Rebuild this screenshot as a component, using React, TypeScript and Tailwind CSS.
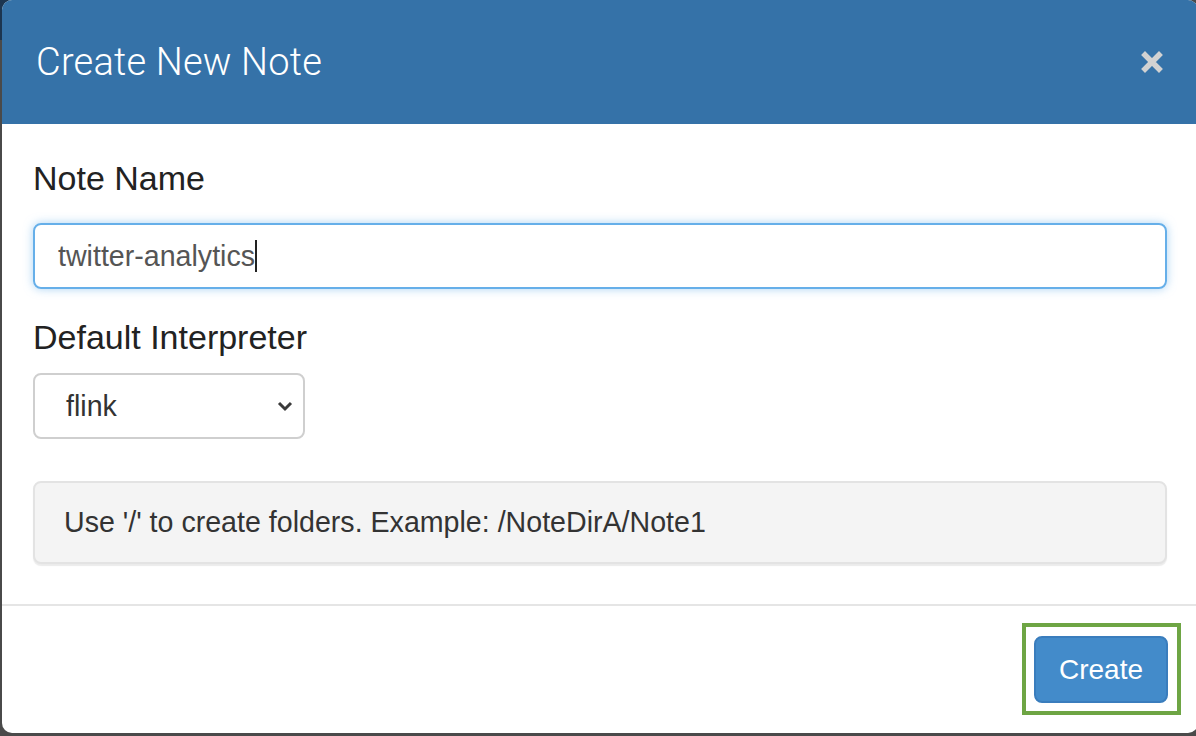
export default function App() {
  return (
    <div className="relative w-[1196px] h-[736px] overflow-hidden bg-[#4a4a4a] font-['Liberation_Sans',Arial,sans-serif]">
      {/* backdrop strip behind top-left corner */}
      <div className="absolute left-0 top-0 w-[12px] h-[40px] bg-[#1c3550]" />

      {/* Modal */}
      <div className="relative ml-[2px] w-[1196px] h-[733px] bg-white rounded-[10px] overflow-hidden flex flex-col">
        {/* Header */}
        <div className="h-[124px] shrink-0 bg-[#3572a8] flex items-center justify-between pl-[34px] pr-[34px]">
          <h1 className="text-white text-[38px] font-light font-['Roboto',sans-serif] tracking-[0.2px]">Create New Note</h1>
          <svg width="22" height="22" viewBox="0 0 22 22" className="mr-[1px]">
            <path d="M4 4L18 18M18 4L4 18" stroke="#d2d2d2" strokeWidth="5.5" strokeLinecap="square" />
          </svg>
        </div>

        {/* Body */}
        <div className="pt-[34px] pl-[31px] pr-[31px] pb-[40px]">
          <div className="text-[34px] leading-[40px] text-[#222]">Note Name</div>
          <div className="mt-[25px] h-[66px] rounded-[8px] border-2 border-[#66afe9] shadow-[0_0_10px_rgba(102,175,233,0.55)] flex items-center pl-[23px] text-[28.6px] text-[#555]">
            <span>twitter-analytics</span>
            <span className="w-[2px] h-[32px] bg-[#222]" />
          </div>

          <div className="mt-[28px] text-[34px] leading-[40px] text-[#222]">Default Interpreter</div>
          <div className="mt-[16px] w-[272px] h-[66px] rounded-[8px] border-2 border-[#cfcfcf] flex items-center justify-between pl-[31px] pr-[10px] text-[28.6px] text-[#333]">
            <span>flink</span>
            <svg width="16" height="12" viewBox="0 0 16 12">
              <path d="M2 3L8 9L14 3" fill="none" stroke="#3a3a3a" strokeWidth="3" />
            </svg>
          </div>

          <div className="mt-[42px] h-[83px] rounded-[8px] border-2 border-[#e3e3e3] bg-[#f4f4f4] shadow-[0_2px_1px_rgba(0,0,0,0.08)] flex items-center pl-[29px] text-[28.6px] text-[#333]">
            Use '/' to create folders. Example: /NoteDirA/Note1
          </div>
        </div>

        {/* Footer */}
        <div className="flex-1 border-t-2 border-[#e5e5e5] flex items-center justify-end pr-[30px]">
          <div className="relative">
            <div className="absolute -left-[12px] -top-[13px] -right-[13px] -bottom-[12px] border-4 border-[#6ea544]" />
            <button className="relative w-[134px] h-[67px] rounded-[8px] bg-[#438bca] border-2 border-[#3a7dbd] text-white text-[28px]">
              Create
            </button>
          </div>
        </div>
      </div>
    </div>
  );
}
